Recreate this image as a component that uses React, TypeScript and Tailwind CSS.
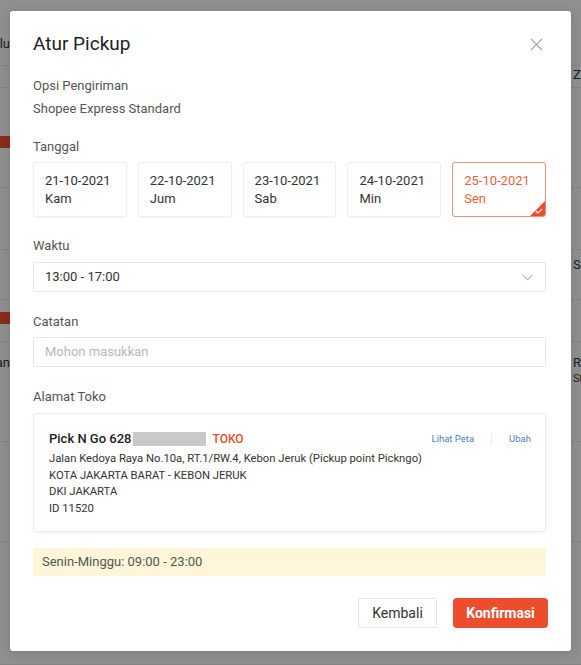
import React from "react";

const dates = [
  { d: "21-10-2021", w: "Kam" },
  { d: "22-10-2021", w: "Jum" },
  { d: "23-10-2021", w: "Sab" },
  { d: "24-10-2021", w: "Min" },
  { d: "25-10-2021", w: "Sen", sel: true },
];

function BgRow({
  h,
  left,
  right,
  leftRed,
  pt,
}: {
  h: string;
  left?: string;
  right?: React.ReactNode;
  leftRed?: boolean;
  pt?: string;
}) {
  return (
    <div className={`flex border-b border-[#e4e4e4] ${h} ${pt ?? ""}`}>
      <div className="flex w-[10px] justify-end overflow-hidden whitespace-nowrap text-[13px] leading-[18px] text-[#333]">
        {leftRed ? <div className="h-[12px] w-[10px] shrink-0 bg-[#ee4d2d]" /> : left}
      </div>
      <div className="flex-1" />
      <div className="w-[8px] overflow-hidden whitespace-nowrap text-[13px] leading-[18px] text-[#333]">
        {right}
      </div>
    </div>
  );
}

export default function App() {
  return (
    <div className="relative h-[665px] w-full overflow-hidden bg-white font-['Roboto','Liberation_Sans',sans-serif]">
      {/* background page */}
      <div className="flex flex-col bg-[#f7f7f7]">
        <BgRow h="h-[66px]" pt="pt-[35px]" left="Kolu" />
        <BgRow h="h-[22px]" pt="pt-[0px]" right="Z I" />
        <BgRow h="h-[100px]" pt="pt-[48px]" leftRed />
        <BgRow h="h-[62px]" />
        <BgRow h="h-[50px]" pt="pt-[6px]" right="Se" />
        <BgRow h="h-[42px]" pt="pt-[12px]" leftRed />
        <BgRow
          h="h-[100px]"
          pt="pt-[12px]"
          left="an"
          right={
            <div className="flex flex-col">
              <span>Re</span>
              <span className="text-[11px] leading-[14px]">Sh</span>
            </div>
          }
        />
        <BgRow h="h-[100px]" />
        <BgRow h="h-[123px]" />
      </div>

      {/* overlay */}
      <div className="absolute inset-0 bg-black/[0.42]" />

      {/* modal */}
      <div className="absolute inset-0 flex justify-center pt-[11px]">
        <div className="h-[640px] w-[561px] rounded-[3px] bg-white pl-[23px] pr-[25px] pt-[21px] shadow-[0_2px_10px_rgba(0,0,0,0.15)]">
          <div className="flex h-[24px] items-center justify-between">
            <div className="text-[19px] leading-[24px] text-[#222]">Atur Pickup</div>
            <svg width="13" height="13" viewBox="0 0 13 13" className="mr-[3px]">
              <path d="M1 1L12 12M12 1L1 12" stroke="#a8a8a8" strokeWidth="1.2" fill="none" />
            </svg>
          </div>

          <div className="mt-[20px] text-[13px] leading-[20px] text-[#555]">Opsi Pengiriman</div>
          <div className="mt-[3px] text-[13px] leading-[20px] text-[#555]">Shopee Express Standard</div>

          <div className="mt-[18px] text-[13px] leading-[20px] text-[#555]">Tanggal</div>
          <div className="mt-[5px] grid grid-cols-5 gap-[11px]">
            {dates.map((x) =>
              x.sel ? (
                <div
                  key={x.d}
                  className="relative flex h-[55px] flex-col justify-center overflow-hidden rounded-[3px] border border-[#ec8f7a] px-[11px] text-[13px] leading-[18px] text-[#ec5f43]"
                >
                  <span>{x.d}</span>
                  <span>{x.w}</span>
                  <div className="absolute bottom-0 right-0 h-0 w-0 border-b-[15px] border-l-[15px] border-b-[#ee4d2d] border-l-transparent" />
                  <svg width="8" height="6" viewBox="0 0 8 6" className="absolute bottom-[2px] right-[2px]">
                    <path d="M0.8 3L3 5L7.2 0.8" stroke="#fff" strokeWidth="1.2" fill="none" />
                  </svg>
                </div>
              ) : (
                <div
                  key={x.d}
                  className="flex h-[55px] flex-col justify-center rounded-[2px] border border-[#efefef] px-[11px] text-[13px] leading-[18px] text-[#333] shadow-[0_1px_2px_rgba(0,0,0,0.04)]"
                >
                  <span>{x.d}</span>
                  <span>{x.w}</span>
                </div>
              )
            )}
          </div>

          <div className="mt-[19px] text-[13px] leading-[20px] text-[#555]">Waktu</div>
          <div className="mt-[6px] flex h-[30px] items-center justify-between rounded-[2px] border border-[#e8e8e8] pl-[11px] pr-[12px] text-[13px] text-[#333]">
            <span>13:00 - 17:00</span>
            <svg width="11" height="7" viewBox="0 0 11 7">
              <path d="M0.7 0.8L5.5 5.6L10.3 0.8" stroke="#b5b5b5" strokeWidth="1.1" fill="none" />
            </svg>
          </div>

          <div className="mt-[20px] text-[13px] leading-[20px] text-[#555]">Catatan</div>
          <div className="mt-[5px] flex h-[30px] items-center rounded-[2px] border border-[#e8e8e8] px-[11px] text-[13px] text-[#b8b8b8]">
            Mohon masukkan
          </div>

          <div className="mt-[20px] text-[13px] leading-[20px] text-[#555]">Alamat Toko</div>
          <div className="mt-[6px] h-[119px] rounded-[2px] border border-[#ededed] pl-[15px] pr-[14px] pt-[15px] shadow-[0_1px_4px_rgba(0,0,0,0.05)]">
            <div className="flex items-center justify-between">
              <div className="flex items-center">
                <span className="text-[13px] font-medium leading-[20px] text-[#222]">Pick N Go 628</span>
                <div className="ml-[1px] h-[14px] w-[73px] bg-[#c9c9c9]" />
                <span className="ml-[7px] text-[12px] font-medium leading-[20px] text-[#ee4d2d]">TOKO</span>
              </div>
              <div className="flex items-center text-[9.5px] leading-[14px] text-[#4a80c6]">
                <span>Lihat Peta</span>
                <div className="mx-[17px] h-[12px] w-px bg-[#ececec]" />
                <span>Ubah</span>
              </div>
            </div>
            <div className="mt-[2px] text-[11.25px] leading-[16.5px] text-[#333]">
              <div>Jalan Kedoya Raya No.10a, RT.1/RW.4, Kebon Jeruk (Pickup point Pickngo)</div>
              <div>KOTA JAKARTA BARAT - KEBON JERUK</div>
              <div>DKI JAKARTA</div>
              <div>ID 11520</div>
            </div>
          </div>

          <div className="mt-[16px] flex h-[28px] items-center bg-[#fff5d8] px-[9px] text-[13px] text-[#555]">
            Senin-Minggu: 09:00 - 23:00
          </div>

          <div className="-mr-[2px] mt-[22px] flex justify-end gap-[16px]">
            <div className="flex h-[30px] w-[79px] items-center justify-center rounded-[2px] border border-[#e5e5e5] text-[14px] text-[#333]">
              Kembali
            </div>
            <div className="flex h-[30px] w-[95px] items-center justify-center rounded-[4px] bg-[#ee4d2d] text-[14px] font-bold text-white">
              Konfirmasi
            </div>
          </div>
        </div>
      </div>
    </div>
  );
}
